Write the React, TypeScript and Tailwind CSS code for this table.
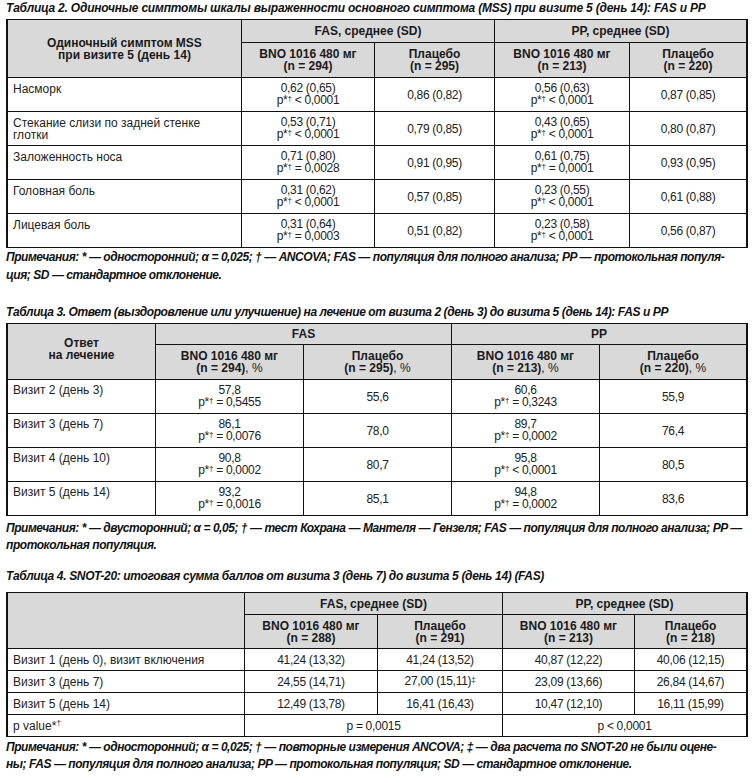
import type { ReactNode } from 'react'
import clsx from 'clsx'

// ячейки таблиц: серые заголовки, белые строки данных, линии — это фон сетки через gap-px
function Head({ children, className }: { children: ReactNode; className?: string }) {
  return (
    <div className={clsx('flex items-center justify-center bg-[#d9d9d9] text-center text-[12px] font-bold leading-[12px] text-[#1a1a1a]', className)}>
      <div>{children}</div>
    </div>
  )
}

function Label({ children, className }: { children: ReactNode; className?: string }) {
  return <div className={clsx('bg-white pl-[5px] text-[12px] leading-[12px]', className)}>{children}</div>
}

function Val({ children, className }: { children: ReactNode; className?: string }) {
  return (
    <div className={clsx('flex items-center justify-center bg-white text-center text-[12px] leading-[12px] tracking-[-0.3px]', className)}>
      <div>{children}</div>
    </div>
  )
}

// мелкий надстрочный значок сноски
function Mark({ children }: { children: ReactNode }) {
  return <span className="relative -top-[3px] text-[8px]">{children}</span>
}

// "p*† < 0,0001"
function P({ op, v }: { op: string; v: string }) {
  return (
    <>
      p*<Mark>†</Mark> {op} {v}
    </>
  )
}

const title = 'text-[12px] font-bold italic leading-[14px] text-[#111] whitespace-nowrap'
const notes = 'text-[12px] font-bold italic tracking-[-0.45px] text-[#111] whitespace-nowrap'

const table2 = [
  { name: <>Насморк</>, a: '0,62 (0,65)', ap: ['<', '0,0001'], b: '0,86 (0,82)', c: '0,56 (0,63)', cp: ['<', '0,0001'], d: '0,87 (0,85)' },
  { name: <>Стекание слизи по задней стенке<br />глотки</>, a: '0,53 (0,71)', ap: ['<', '0,0001'], b: '0,79 (0,85)', c: '0,43 (0,65)', cp: ['<', '0,0001'], d: '0,80 (0,87)' },
  { name: <>Заложенность носа</>, a: '0,71 (0,80)', ap: ['=', '0,0028'], b: '0,91 (0,95)', c: '0,61 (0,75)', cp: ['=', '0,0001'], d: '0,93 (0,95)' },
  { name: <>Головная боль</>, a: '0,31 (0,62)', ap: ['<', '0,0001'], b: '0,57 (0,85)', c: '0,23 (0,55)', cp: ['<', '0,0001'], d: '0,61 (0,88)' },
  { name: <>Лицевая боль</>, a: '0,31 (0,64)', ap: ['=', '0,0003'], b: '0,51 (0,82)', c: '0,23 (0,58)', cp: ['<', '0,0001'], d: '0,56 (0,87)' },
]

const table3 = [
  { name: 'Визит 2 (день 3)', a: '57,8', ap: ['=', '0,5455'], b: '55,6', c: '60,6', cp: ['=', '0,3243'], d: '55,9' },
  { name: 'Визит 3 (день 7)', a: '86,1', ap: ['=', '0,0076'], b: '78,0', c: '89,7', cp: ['=', '0,0002'], d: '76,4' },
  { name: 'Визит 4 (день 10)', a: '90,8', ap: ['=', '0,0002'], b: '80,7', c: '95,8', cp: ['<', '0,0001'], d: '80,5' },
  { name: 'Визит 5 (день 14)', a: '93,2', ap: ['=', '0,0016'], b: '85,1', c: '94,8', cp: ['=', '0,0002'], d: '83,6' },
]

const table4 = [
  { name: 'Визит 1 (день 0), визит включения', a: '41,24 (13,32)', b: <>41,24 (13,52)</>, c: '40,87 (12,22)', d: '40,06 (12,15)' },
  { name: 'Визит 3 (день 7)', a: '24,55 (14,71)', b: <>27,00 (15,11)<Mark>‡</Mark></>, c: '23,09 (13,66)', d: '26,84 (14,67)' },
  { name: 'Визит 5 (день 14)', a: '12,49 (13,78)', b: <>16,41 (16,43)</>, c: '10,47 (12,10)', d: '16,11 (15,99)' },
]

export default function App() {
  return (
    <div className="h-[783px] w-[754px] bg-white pl-[6px] pt-[1px] font-['Liberation_Sans',Arial,sans-serif] text-[#222]">
      <div className={clsx(title, 'mb-[4px] tracking-[-0.2px]')}>
        Таблица 2. Одиночные симптомы шкалы выраженности основного симптома (MSS) при визите 5 (день 14): FAS и PP
      </div>
      <div className="grid w-[742px] grid-cols-[233px_132px_119px_134px_116px] grid-rows-[22px_34px_repeat(5,33px)] gap-px bg-[#111] px-[2px] py-px">
        <Head className="row-span-2">
          Одиночный симптом MSS
          <br />
          при визите 5 (день 14)
        </Head>
        <Head className="col-span-2">FAS, среднее (SD)</Head>
        <Head className="col-span-2">PP, среднее (SD)</Head>
        <Head>BNO 1016 480 мг<br />(n = 294)</Head>
        <Head>Плацебо<br />(n = 295)</Head>
        <Head>BNO 1016 480 мг<br />(n = 213)</Head>
        <Head>Плацебо<br />(n = 220)</Head>
        {table2.map((r, i) => (
          <div key={i} className="contents">
            <Label className="pt-[5px]">{r.name}</Label>
            <Val>{r.a}<br /><P op={r.ap[0]} v={r.ap[1]} /></Val>
            <Val>{r.b}</Val>
            <Val>{r.c}<br /><P op={r.cp[0]} v={r.cp[1]} /></Val>
            <Val>{r.d}</Val>
          </div>
        ))}
      </div>
      <div className={clsx(notes, 'leading-[18px]')}>
        Примечания: * — односторонний; α = 0,025; † — ANCOVA; FAS — популяция для полного анализа; PP — протокольная популя-
        <br />
        ция; SD — стандартное отклонение.
      </div>

      <div className={clsx(title, 'mb-[4px] mt-[21px] tracking-[-0.4px]')}>
        Таблица 3. Ответ (выздоровление или улучшение) на лечение от визита 2 (день 3) до визита 5 (день 14): FAS и PP
      </div>
      <div className="grid w-[742px] grid-cols-[147px_147px_147px_147px_146px] grid-rows-[20px_34px_repeat(4,33px)] gap-px bg-[#111] px-[2px] py-px">
        <Head className="row-span-2 pb-[6px]">
          Ответ
          <br />
          на лечение
        </Head>
        <Head className="col-span-2">FAS</Head>
        <Head className="col-span-2">PP</Head>
        <Head>BNO 1016 480 мг<br />(n = 294)<span className="font-normal">, %</span></Head>
        <Head>Плацебо<br />(n = 295)<span className="font-normal">, %</span></Head>
        <Head>BNO 1016 480 мг<br />(n = 213)<span className="font-normal">, %</span></Head>
        <Head>Плацебо<br />(n = 220)<span className="font-normal">, %</span></Head>
        {table3.map((r) => (
          <div key={r.name} className="contents">
            <Label className="pt-[4px]">{r.name}</Label>
            <Val>{r.a}<br /><P op={r.ap[0]} v={r.ap[1]} /></Val>
            <Val>{r.b}</Val>
            <Val>{r.c}<br /><P op={r.cp[0]} v={r.cp[1]} /></Val>
            <Val>{r.d}</Val>
          </div>
        ))}
      </div>
      <div className={clsx(notes, 'mt-[4px] leading-[17px]')}>
        Примечания: * — двусторонний; α = 0,05; † — тест Кохрана — Мантеля — Гензеля; FAS — популяция для полного анализа; PP —
        <br />
        протокольная популяция.
      </div>

      <div className={clsx(title, 'mb-[9px] mt-[15px] tracking-[-0.35px]')}>
        Таблица 4. SNOT-20: итоговая сумма баллов от визита 3 (день 7) до визита 5 (день 14) (FAS)
      </div>
      <div className="grid w-[742px] grid-cols-[236px_132px_124px_131px_111px] grid-rows-[21px_33px_repeat(4,21px)] gap-px bg-[#111] px-[2px] py-px">
        <Head className="row-span-2">{''}</Head>
        <Head className="col-span-2">FAS, среднее (SD)</Head>
        <Head className="col-span-2">PP, среднее (SD)</Head>
        <Head>BNO 1016 480 мг<br />(n = 288)</Head>
        <Head>Плацебо<br />(n = 291)</Head>
        <Head>BNO 1016 480 мг<br />(n = 213)</Head>
        <Head>Плацебо<br />(n = 218)</Head>
        {table4.map((r) => (
          <div key={r.name} className="contents">
            <Label className="flex items-center">{r.name}</Label>
            <Val>{r.a}</Val>
            <Val>{r.b}</Val>
            <Val>{r.c}</Val>
            <Val>{r.d}</Val>
          </div>
        ))}
        <Label className="flex items-center">
          p value*<Mark>†</Mark>
        </Label>
        <Val className="col-span-2">p = 0,0015</Val>
        <Val className="col-span-2">p &lt; 0,0001</Val>
      </div>
      <div className={clsx(notes, 'mt-[2px] leading-[17px] tracking-[-0.3px]')}>
        Примечания: * — односторонний; α = 0,025; † — повторные измерения ANCOVA; ‡ — два расчета по SNOT-20 не были оцене-
        <br />
        ны; FAS — популяция для полного анализа; PP — протокольная популяция; SD — стандартное отклонение.
      </div>
    </div>
  )
}
